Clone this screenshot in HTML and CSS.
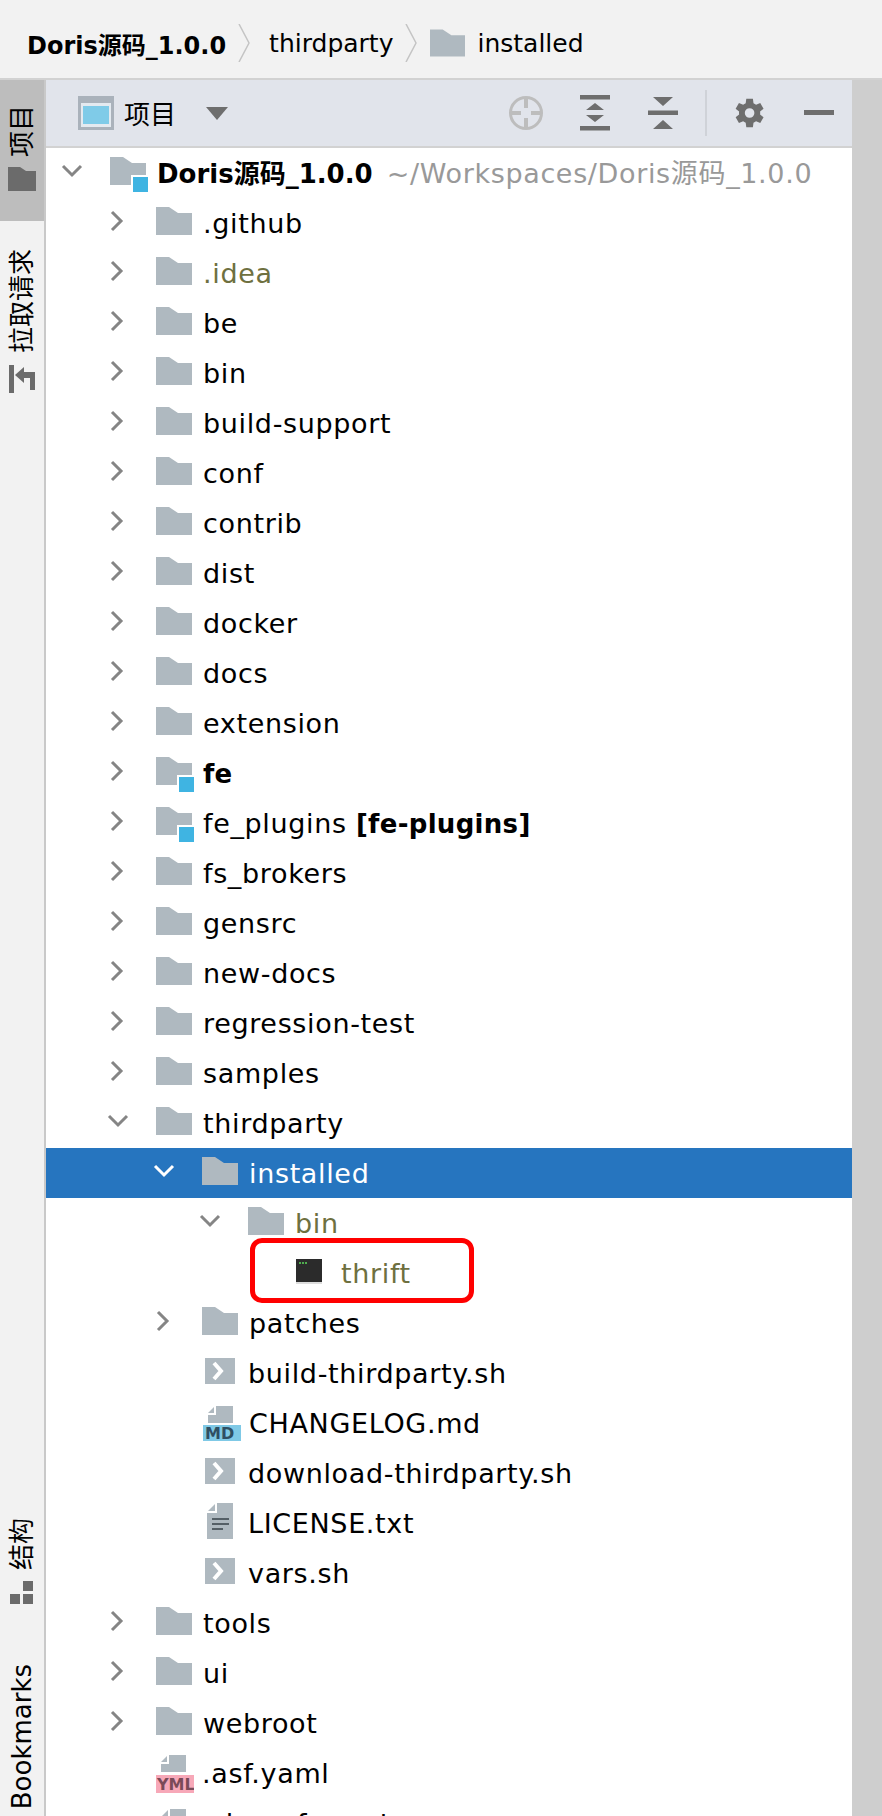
FILE: index.html
```html
<!DOCTYPE html>
<html lang="zh">
<head>
    <meta charset="UTF-8">
    <meta name="viewport" content="width=device-width, initial-scale=1.0">
    <title>Doris源码_1.0.0</title>
    <link rel="stylesheet" href="styles.css">
</head>
<body>
    <!-- Icones partagees -->
    <svg class="sprites" width="0" height="0">
        <symbol id="folder" viewBox="0 0 36 28"><path d="M0 0H13L22 6H36V28H0Z" fill="#afb9c0"/></symbol>
        <symbol id="module" viewBox="0 0 38 36"><path d="M0 0H13L22 6H36V28H0Z" fill="#afb9c0"/><rect x="21" y="18" width="17" height="18" fill="#fff"/><rect x="23" y="20" width="15" height="15" fill="#3fb4e2"/></symbol>
        <symbol id="right" viewBox="0 0 14 22"><path d="M2 2L11 11L2 20" fill="none" stroke="#858585" stroke-width="3"/></symbol>
        <symbol id="down" viewBox="0 0 22 14"><path d="M2 2L11 11L20 2" fill="none" stroke="#858585" stroke-width="3"/></symbol>
        <symbol id="down-white" viewBox="0 0 22 14"><path d="M2 2L11 11L20 2" fill="none" stroke="#fff" stroke-width="3"/></symbol>
        <symbol id="shell" viewBox="0 0 30 26"><rect width="30" height="26" fill="#afb9c0"/><path d="M9 5L16 13L9 21" fill="none" stroke="#fff" stroke-width="4"/></symbol>
        <symbol id="text" viewBox="0 0 26 36"><path d="M10 0H26V36H0V10H10Z" fill="#afb9c0"/><path d="M8 1V8H1Z" fill="#afb9c0"/><path d="M5 16H22M5 21H22M5 26H16" stroke="#555f66" stroke-width="2"/></symbol>
        <symbol id="terminal" viewBox="0 0 28 26"><rect x="1" y="1" width="26" height="23" fill="#2b2b2b"/><path d="M1 25H27" stroke="#bbb"/><path d="M4 5H13" stroke="#4fae4f" stroke-width="2" stroke-dasharray="2 1"/></symbol>
    </svg>

    <header class="titlebar">
        <span class="crumb crumb-root">Doris源码_1.0.0</span>
        <svg class="crumb-sep" width="12" height="38" viewBox="0 0 12 38"><path d="M1 0L11 19L1 38" fill="none" stroke="#c4c4c4" stroke-width="1.5"/></svg>
        <span class="crumb">thirdparty</span>
        <svg class="crumb-sep" width="12" height="38" viewBox="0 0 12 38"><path d="M1 0L11 19L1 38" fill="none" stroke="#c4c4c4" stroke-width="1.5"/></svg>
        <svg class="crumb-folder" width="35" height="28"><use href="#folder"/></svg>
        <span class="crumb">installed</span>
    </header>

    <div class="workspace">
        <aside class="strip">
            <div class="tab tab-active">
                <span class="tab-label">项目</span>
                <svg class="tab-icon" width="28" height="24" viewBox="0 0 28 24"><path d="M0 0H12L18 4H28V24H0Z" fill="#6b6b6b"/></svg>
            </div>
            <div class="tab tab-pull">
                <span class="tab-label">拉取请求</span>
                <svg class="tab-icon" width="26" height="28" viewBox="0 0 26 28"><path d="M0 0H5V28H0ZM6 10L15 2V18ZM15 7H26V25H21V13H15Z" fill="#6b6b6b"/></svg>
            </div>
            <div class="strip-bottom">
                <div class="tab">
                    <span class="tab-label">结构</span>
                    <svg class="tab-icon" width="24" height="24" viewBox="0 0 24 24"><path d="M0 14H10V24H0ZM13 14H23V24H13ZM13 1H23V11H13Z" fill="#6b6b6b"/></svg>
                </div>
                <div class="tab tab-last">
                    <span class="tab-label">Bookmarks</span>
                </div>
            </div>
        </aside>

        <main class="panel">
            <div class="toolbar">
                <svg class="tool-window" width="36" height="34" viewBox="0 0 36 34"><rect width="36" height="34" fill="#aab2bb"/><rect x="3" y="7" width="30" height="24" fill="#e4eaf0"/><rect x="5" y="10" width="26" height="18" fill="#7fcbe8"/></svg>
                <span class="toolbar-title">项目</span>
                <svg class="tool-caret" width="22" height="13" viewBox="0 0 22 13"><path d="M0 0H22L11 13Z" fill="#6e6e6e"/></svg>
                <div class="tools">
                    <svg width="36" height="36" viewBox="0 0 36 36"><circle cx="18" cy="18" r="15.500" fill="none" stroke="#bdbdbd" stroke-width="3"/><path d="M18 2V13M18 23V34M2 18H13M23 18H34" stroke="#bdbdbd" stroke-width="4"/></svg>
                    <svg class="tool-expand" width="30" height="36" viewBox="0 0 30 36"><path d="M0 0H30V4.500H0ZM0 31H30V35.500H0ZM15 8L24 15H6ZM15 27L6 20H24Z" fill="#6e6e6e"/></svg>
                    <svg width="30" height="36" viewBox="0 0 30 36"><path d="M0 15.500H30V20H0ZM5 2H25L15 11ZM15 25L25 34H5Z" fill="#6e6e6e"/></svg>
                    <span class="tool-divider"></span>
                    <svg class="tool-gear" width="36" height="36" viewBox="0 0 24 24"><path fill="#6e6e6e" d="M19.400 13a7.500 7.500 0 0 0 0-2l2.300-1.800-2.200-3.800-2.800 1.100a7.500 7.500 0 0 0-1.700-1L14.600 2.500H10.200L9.800 5.500a7.500 7.500 0 0 0-1.700 1L5.300 5.400 3.100 9.200 5.400 11a7.500 7.500 0 0 0 0 2l-2.300 1.800 2.200 3.800 2.800-1.100a7.500 7.500 0 0 0 1.700 1l.4 3h4.400l.4-3a7.500 7.500 0 0 0 1.700-1l2.800 1.100 2.200-3.800ZM12.400 15.200a3.200 3.200 0 1 1 0-6.400 3.200 3.200 0 0 1 0 6.400Z"/></svg>
                    <svg width="30" height="6" viewBox="0 0 30 6"><rect width="30" height="5" fill="#6e6e6e"/></svg>
                </div>
            </div>

            <ul class="tree">
                <li class="row"><svg class="twisty-down" width="22" height="14"><use href="#down"/></svg><svg class="ico ico-module" width="38" height="36"><use href="#module"/></svg><span class="name"><b class="root-name">Doris源码_1.0.0</b><span class="path">~/Workspaces/Doris源码_1.0.0</span></span></li>
                <li class="row d1"><svg class="twisty" width="14" height="22"><use href="#right"/></svg><svg class="ico" width="36" height="28"><use href="#folder"/></svg><span class="name">.github</span></li>
                <li class="row d1"><svg class="twisty" width="14" height="22"><use href="#right"/></svg><svg class="ico" width="36" height="28"><use href="#folder"/></svg><span class="name olive">.idea</span></li>
                <li class="row d1"><svg class="twisty" width="14" height="22"><use href="#right"/></svg><svg class="ico" width="36" height="28"><use href="#folder"/></svg><span class="name">be</span></li>
                <li class="row d1"><svg class="twisty" width="14" height="22"><use href="#right"/></svg><svg class="ico" width="36" height="28"><use href="#folder"/></svg><span class="name">bin</span></li>
                <li class="row d1"><svg class="twisty" width="14" height="22"><use href="#right"/></svg><svg class="ico" width="36" height="28"><use href="#folder"/></svg><span class="name">build-support</span></li>
                <li class="row d1"><svg class="twisty" width="14" height="22"><use href="#right"/></svg><svg class="ico" width="36" height="28"><use href="#folder"/></svg><span class="name">conf</span></li>
                <li class="row d1"><svg class="twisty" width="14" height="22"><use href="#right"/></svg><svg class="ico" width="36" height="28"><use href="#folder"/></svg><span class="name">contrib</span></li>
                <li class="row d1"><svg class="twisty" width="14" height="22"><use href="#right"/></svg><svg class="ico" width="36" height="28"><use href="#folder"/></svg><span class="name">dist</span></li>
                <li class="row d1"><svg class="twisty" width="14" height="22"><use href="#right"/></svg><svg class="ico" width="36" height="28"><use href="#folder"/></svg><span class="name">docker</span></li>
                <li class="row d1"><svg class="twisty" width="14" height="22"><use href="#right"/></svg><svg class="ico" width="36" height="28"><use href="#folder"/></svg><span class="name">docs</span></li>
                <li class="row d1"><svg class="twisty" width="14" height="22"><use href="#right"/></svg><svg class="ico" width="36" height="28"><use href="#folder"/></svg><span class="name">extension</span></li>
                <li class="row d1"><svg class="twisty" width="14" height="22"><use href="#right"/></svg><svg class="ico ico-module" width="38" height="36"><use href="#module"/></svg><span class="name"><b>fe</b></span></li>
                <li class="row d1"><svg class="twisty" width="14" height="22"><use href="#right"/></svg><svg class="ico ico-module" width="38" height="36"><use href="#module"/></svg><span class="name">fe_plugins <b>[fe-plugins]</b></span></li>
                <li class="row d1"><svg class="twisty" width="14" height="22"><use href="#right"/></svg><svg class="ico" width="36" height="28"><use href="#folder"/></svg><span class="name">fs_brokers</span></li>
                <li class="row d1"><svg class="twisty" width="14" height="22"><use href="#right"/></svg><svg class="ico" width="36" height="28"><use href="#folder"/></svg><span class="name">gensrc</span></li>
                <li class="row d1"><svg class="twisty" width="14" height="22"><use href="#right"/></svg><svg class="ico" width="36" height="28"><use href="#folder"/></svg><span class="name">new-docs</span></li>
                <li class="row d1"><svg class="twisty" width="14" height="22"><use href="#right"/></svg><svg class="ico" width="36" height="28"><use href="#folder"/></svg><span class="name">regression-test</span></li>
                <li class="row d1"><svg class="twisty" width="14" height="22"><use href="#right"/></svg><svg class="ico" width="36" height="28"><use href="#folder"/></svg><span class="name">samples</span></li>
                <li class="row d1"><svg class="twisty-down" width="22" height="14"><use href="#down"/></svg><svg class="ico" width="36" height="28"><use href="#folder"/></svg><span class="name">thirdparty</span></li>
                <li class="row d2 selected"><svg class="twisty-down" width="22" height="14"><use href="#down-white"/></svg><svg class="ico" width="36" height="28"><use href="#folder"/></svg><span class="name">installed</span></li>
                <li class="row d3"><svg class="twisty-down" width="22" height="14"><use href="#down"/></svg><svg class="ico" width="36" height="28"><use href="#folder"/></svg><span class="name olive">bin</span></li>
                <li class="row leaf-d4"><svg class="ico ico-terminal" width="28" height="26"><use href="#terminal"/></svg><span class="name olive">thrift</span><span class="highlight"></span></li>
                <li class="row d2"><svg class="twisty" width="14" height="22"><use href="#right"/></svg><svg class="ico" width="36" height="28"><use href="#folder"/></svg><span class="name">patches</span></li>
                <li class="row leaf-d2"><svg class="ico ico-shell" width="30" height="26"><use href="#shell"/></svg><span class="name">build-thirdparty.sh</span></li>
                <li class="row leaf-d2">
                    <svg class="ico ico-badge" width="38" height="36" viewBox="0 0 38 36"><path d="M13 0H30V17H5V9H13Z" fill="#afb9c0"/><path d="M11 1V7H5Z" fill="#afb9c0"/><rect y="19" width="38" height="16" fill="#7fc9e6"/><text class="badge-text" x="2" y="33" fill="#2f4f63">MD</text></svg>
                    <span class="name">CHANGELOG.md</span>
                </li>
                <li class="row leaf-d2"><svg class="ico ico-shell" width="30" height="26"><use href="#shell"/></svg><span class="name">download-thirdparty.sh</span></li>
                <li class="row leaf-d2"><svg class="ico ico-text" width="26" height="36"><use href="#text"/></svg><span class="name">LICENSE.txt</span></li>
                <li class="row leaf-d2"><svg class="ico ico-shell" width="30" height="26"><use href="#shell"/></svg><span class="name">vars.sh</span></li>
                <li class="row d1"><svg class="twisty" width="14" height="22"><use href="#right"/></svg><svg class="ico" width="36" height="28"><use href="#folder"/></svg><span class="name">tools</span></li>
                <li class="row d1"><svg class="twisty" width="14" height="22"><use href="#right"/></svg><svg class="ico" width="36" height="28"><use href="#folder"/></svg><span class="name">ui</span></li>
                <li class="row d1"><svg class="twisty" width="14" height="22"><use href="#right"/></svg><svg class="ico" width="36" height="28"><use href="#folder"/></svg><span class="name">webroot</span></li>
                <li class="row leaf-d1">
                    <svg class="ico ico-badge" width="38" height="38" viewBox="0 0 38 38"><path d="M13 0H30V17H5V9H13Z" fill="#afb9c0"/><path d="M11 1V7H5Z" fill="#afb9c0"/><rect y="20" width="38" height="18" fill="#f7a8b8"/><text class="badge-text" x="1" y="35" fill="#7a4a58">YML</text></svg>
                    <span class="name">.asf.yaml</span>
                </li>
                <li class="row leaf-d1"><svg class="ico ico-text ico-text-low" width="26" height="36"><use href="#text"/></svg><span class="name">.clang-format</span></li>
            </ul>
        </main>

        <div class="gutter"></div>
    </div>
</body>
</html>
```

FILE: styles.css
```css
* {
    box-sizing: border-box;
}

html, body {
    margin: 0;
    height: 1816px;
    overflow: hidden;
}

body {
    font-family: "DejaVu Sans", "Noto Sans CJK SC", sans-serif;
    font-size: 26px;
    color: #000;
    background: #f2f2f2;
}

.sprites {
    position: absolute;
}

/* Barre du haut */
.titlebar {
    display: flex;
    align-items: center;
    height: 80px;
    padding: 8px 0 0 27px;
    border-bottom: 2px solid #d2d2d2;
    font-size: 25px;
}

.crumb-root {
    font-size: 24px;
    font-weight: bold;
}

.crumb-sep {
    margin: 0 19px 0 12px;
}

.crumb-folder {
    margin: 0 12px 0 -6px;
}

/* Colonnes */
.workspace {
    display: grid;
    grid-template-columns: 46px 806px 30px;
    height: 1736px;
}

.gutter {
    background: #cecece;
}

/* Bande laterale */
.strip {
    display: flex;
    flex-direction: column;
    border-right: 2px solid #c9c9c9;
}

.tab {
    display: flex;
    flex-direction: column;
    align-items: center;
    gap: 10px;
}

.tab-active {
    height: 141px;
    padding-top: 25px;
    background: #bdbdbd;
}

.tab-pull {
    margin-top: 28px;
    gap: 12px;
}

.tab-label {
    writing-mode: vertical-rl;
    text-orientation: sideways;
    transform: rotate(180deg);
    line-height: 44px;
    width: 44px;
    text-align: center;
}

.strip-bottom {
    margin-top: auto;
    padding-bottom: 9px;
}

.tab-last {
    margin-top: 60px;
}

/* Barre d'outils du panneau */
.toolbar {
    display: flex;
    align-items: center;
    height: 68px;
    padding: 0 18px 0 32px;
    background: #e1e4eb;
    border-bottom: 2px solid #d2d2d2;
}

.toolbar-title {
    margin: -2px 0 0 10px;
}

.tool-caret {
    margin-left: 30px;
}

.tools {
    display: flex;
    align-items: center;
    gap: 36px;
    margin-left: auto;
}

.tool-expand {
    margin-right: 2px;
}

.tool-divider {
    width: 2px;
    height: 46px;
    margin: 0 -12px 0 -9px;
    background: #cfd2d8;
}

.tool-gear {
    margin-right: 1px;
}

/* Arbre */
.tree {
    margin: 0;
    padding: 0;
    list-style: none;
    background: #fff;
    height: 1670px;
    overflow: hidden;
}

.row {
    position: relative;
    display: flex;
    align-items: center;
    height: 50px;
    white-space: nowrap;
}

.d1 { padding-left: 46px; }
.d2 { padding-left: 92px; }
.d3 { padding-left: 138px; }
.leaf-d1 { padding-left: 110px; }
.leaf-d2 { padding-left: 157px; }
.leaf-d4 { padding-left: 249px; }

.twisty {
    flex: none;
    margin: -4px 32px 0 18px;
}

.twisty-down {
    flex: none;
    margin: -4px 27px 0 15px;
}

.ico {
    flex: none;
    margin: -4px 11px 0 0;
}

.ico-module {
    margin: 4px 9px 0 0;
}

.ico-shell {
    margin: -4px 13px 0 2px;
}

.ico-text {
    margin: -4px 15px 0 4px;
}

.ico-text-low {
    margin-top: 8px;
}

.ico-badge {
    margin: 2px 8px 0 0;
}

.ico-terminal {
    margin-right: 18px;
}

.badge-text {
    font-family: "DejaVu Sans", sans-serif;
    font-size: 16px;
    font-weight: bold;
}

.name {
    padding-top: 2px;
    line-height: 48px;
    font-size: 27px;
    letter-spacing: 0.65px;
}

.name b {
    font-size: 26px;
    letter-spacing: 0.3px;
}

.name .root-name {
    letter-spacing: 0;
}

.olive {
    color: #6e7040;
}

.path {
    margin-left: 14px;
    color: #999;
}

.selected {
    background: #2675bf;
    color: #fff;
}

/* Cadre rouge autour du fichier */
.highlight {
    position: absolute;
    left: 204px;
    top: -10px;
    width: 224px;
    height: 65px;
    border: 5px solid #f00;
    border-radius: 12px;
}
```
